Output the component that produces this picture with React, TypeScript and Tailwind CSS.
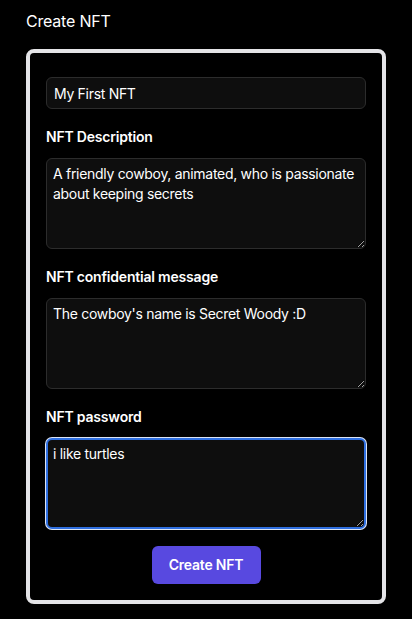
import { useState } from 'react';

const fieldClass =
  'w-full rounded-md bg-[#0e0e0e] border border-[#2c2c2c] text-sm tracking-[-0.3px] text-white leading-5 outline-none';

export default function App() {
  const [name, setName] = useState('My First NFT');
  const [description, setDescription] = useState(
    'A friendly cowboy, animated, who is passionate about keeping secrets'
  );
  const [message, setMessage] = useState("The cowboy's name is Secret Woody :D");
  const [password, setPassword] = useState('i like turtles');

  return (
    <div className="min-h-screen bg-black px-[26px] pt-[9px] text-white font-['Inter',sans-serif]">
      <h1 className="text-base leading-6 font-normal tracking-[-0.2px]">Create NFT</h1>

      {/* Form card */}
      <div className="mt-4 w-[360px] rounded-lg border-4 border-[#e4e4e7] bg-black px-4 pt-6 pb-4">
        <input
          value={name}
          onChange={(e) => setName(e.target.value)}
          className={`${fieldClass} h-8 px-[7px]`}
        />

        <label className="mt-[18px] mb-[11px] block text-sm font-semibold leading-5 tracking-[-0.2px]">
          NFT Description
        </label>
        <textarea
          value={description}
          onChange={(e) => setDescription(e.target.value)}
          className={`${fieldClass} block h-[91px] px-[6px] py-[5px]`}
        />

        <label className="mt-[18px] mb-[11px] block text-sm font-semibold leading-5 tracking-[-0.2px]">
          NFT confidential message
        </label>
        <textarea
          value={message}
          onChange={(e) => setMessage(e.target.value)}
          className={`${fieldClass} block h-[91px] px-[6px] py-[5px]`}
        />

        <label className="mt-[18px] mb-[11px] block text-sm font-semibold leading-5 tracking-[-0.2px]">
          NFT password
        </label>
        <textarea
          value={password}
          onChange={(e) => setPassword(e.target.value)}
          className="block h-[91px] w-full rounded-md bg-[#0e0e0e] border-2 border-[#2f6fe0] ring-1 ring-[#dbe4f5] px-[5px] py-[4px] text-sm leading-5 tracking-[-0.3px] text-white outline-none"
        />

        <div className="mt-[17px] flex justify-center">
          <button className="h-[38px] w-[109px] rounded-md bg-[#5849e0] text-sm font-semibold tracking-[-0.2px] text-white">
            Create NFT
          </button>
        </div>
      </div>
    </div>
  );
}
